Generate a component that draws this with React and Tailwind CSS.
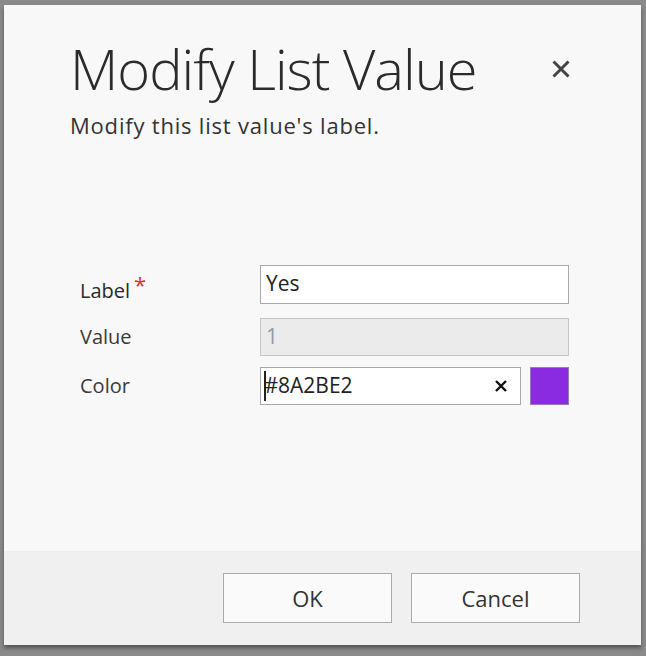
import React from 'react';

export default function App() {
  return (
    <div className="w-[646px] h-[656px] bg-[#8a8a8a] pt-[5px] pl-[4px] pr-[5px] pb-[11px] font-['Open_Sans',sans-serif]">
      <div className="h-full bg-[#f8f8f8] flex flex-col shadow-[0_3px_4px_rgba(0,0,0,0.4)]">
        {/* Header */}
        <div className="flex justify-between pl-[66px] pr-[68px] pt-[30px]">
          <div>
            <h1 className="text-[56px] leading-[66px] font-light text-[#2b2b2b] tracking-[-1px]">Modify List Value</h1>
            <p className="mt-[10px] text-[22px] leading-[28px] text-[#333] tracking-[0.8px]">Modify this list value's label.</p>
          </div>
          <button className="mt-[22px] h-[24px] w-[24px] flex items-center justify-center text-[#444]">
            <svg width="20" height="20" viewBox="0 0 20 20">
              <path d="M2.5 2.5L17.5 17.5M17.5 2.5L2.5 17.5" stroke="currentColor" strokeWidth="3" />
            </svg>
          </button>
        </div>

        {/* Form */}
        <div className="mt-[124px] pl-[76px] flex flex-col gap-[13px]">
          <div className="flex items-center">
            <div className="w-[180px] pt-[14px] text-[20px] leading-[28px] text-[#2a2a2a]">
              Label<span className="text-[#e03030] text-[22px] leading-none ml-[4px] relative -top-[5px]">*</span>
            </div>
            <div className="w-[309px] h-[39px] border border-[#a8a8a8] bg-white flex items-center px-[5px] text-[21px] text-[#222]">Yes</div>
          </div>
          <div className="flex items-center">
            <div className="w-[180px] text-[20px] text-[#3a3a3a]">Value</div>
            <div className="w-[309px] h-[38px] border border-[#c6c6c6] bg-[#ebebeb] flex items-center px-[5px] text-[21px] text-[#999]">1</div>
          </div>
          <div className="flex items-center -mt-[2px]">
            <div className="w-[180px] text-[20px] text-[#3a3a3a]">Color</div>
            <div className="w-[261px] h-[38px] border border-[#a8a8a8] bg-white flex items-center pl-[3px] pr-[12px] text-[21px] text-[#222]">
              <span className="w-[1.5px] h-[30px] bg-[#222] mr-[-1px]" />
              <span className="flex-1">#8A2BE2</span>
              <svg width="14" height="14" viewBox="0 0 14 14" className="text-[#111]">
                <path d="M2 2L12 12M12 2L2 12" stroke="currentColor" strokeWidth="2.4" />
              </svg>
            </div>
            <div className="ml-[9px] w-[39px] h-[38px] bg-[#8a2be2] border border-[#9a7ab8]" />
          </div>
        </div>

        {/* Footer */}
        <div className="mt-auto h-[94px] bg-[#f0f0f0] flex justify-end items-start pt-[22px] pr-[61px] gap-[19px]">
          <button className="w-[169px] h-[50px] border border-[#ababab] bg-[#fafafa] text-[22px] text-[#333]">OK</button>
          <button className="w-[169px] h-[50px] border border-[#ababab] bg-[#fafafa] text-[22px] text-[#333]">Cancel</button>
        </div>
      </div>
    </div>
  );
}
